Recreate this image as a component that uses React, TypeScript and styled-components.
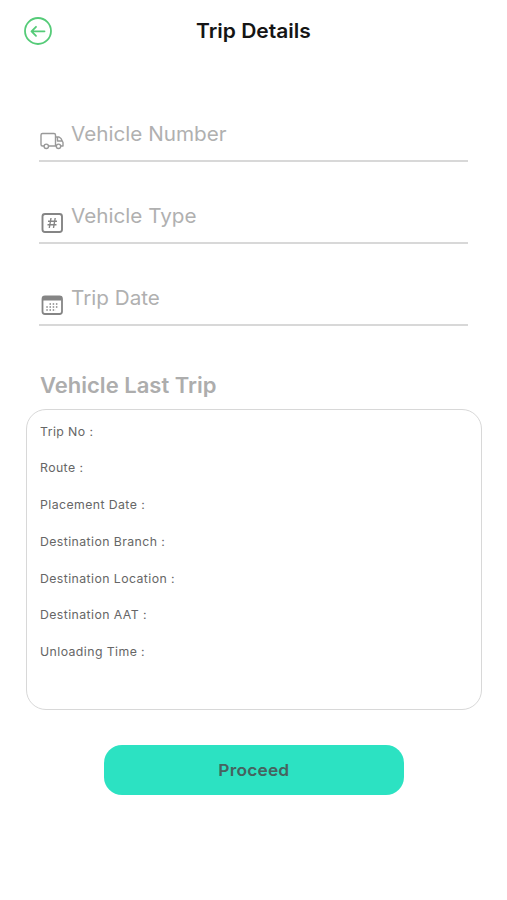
import React from "react";
import styled, { createGlobalStyle } from "styled-components";

const Global = createGlobalStyle`
  * { box-sizing: border-box; }
  body { margin: 0; background: #fff; font-family: Inter, "Liberation Sans", sans-serif; }
`;
const Screen = styled.main`
  width: 507px; height: 900px; background: #fff; overflow: hidden;
  display: flex; flex-direction: column;
`;
const Header = styled.header`
  height: 62px; display: grid; grid-template-columns: 76px 1fr 76px; align-items: center;
`;
const BackButton = styled.button`
  width: 30px; height: 30px; margin-left: 23px; padding: 0; border: 0; background: none; display: flex;
`;
const Title = styled.h1`
  margin: 0; text-align: center; font-size: 20px; font-weight: 600; line-height: 26px;
  transform: scaleX(1.05); color: #151515;
`;
const Form = styled.form`
  padding: 38px 39px 0; display: flex; flex-direction: column; gap: 20px;
`;
const Field = styled.label`
  height: 62px; border-bottom: 2px solid #d8d8d8; display: flex; gap: 7px; padding-top: 20.5px;
`;
const FieldIcon = styled.span`
  width: 25px; height: 26px; margin-top: 7.5px; display: flex;
`;
const FieldText = styled.span`
  font-size: 20px; line-height: 26px; color: #b0b0b0;
  transform: scaleX(1.033); transform-origin: left;
`;
const SectionTitle = styled.h2`
  margin: 45.5px 0 0 40px; font-size: 21px; line-height: 28px; font-weight: 600;
  transform: scaleX(1.049); transform-origin: left; align-self: flex-start; color: #adadad;
`;
const Card = styled.section`
  width: 456px; height: 301px; margin: 9.5px 0 0 26px; padding: 2.5px 12.500px;
  border: 1.5px solid #d8d8d8; border-radius: 20px;
`;
const Detail = styled.p`
  margin: 0; height: 36.75px; line-height: 38px; font-size: 11.8px; letter-spacing: 0.4px; color: #666;
  transform: scaleX(1.042); transform-origin: left;
`;
const Proceed = styled.button`
  width: 300px; height: 50px; margin: 34.5px 0 0 104px; padding: 0; border: 0; border-radius: 18px;
  background: #2ce2c2; font: 600 16.5px Inter, sans-serif; color: #46635f;
`;
const ProceedText = styled.span`
  display: inline-block; letter-spacing: 0.2px; transform: scaleX(1.05);
`;

const Arrow = () => (
  <svg width="30" height="30" viewBox="0 0 30 30" fill="none" stroke="#55cb78" strokeWidth="1.8" strokeLinecap="round" strokeLinejoin="round">
    <circle cx="15" cy="15" r="13" />
    <path d="M21.500 15.300H8.800M13 10.800l-4.500 4.500 4.500 4.500" />
  </svg>
);
const Truck = () => (
  <svg width="25" height="26" viewBox="0 0 25 26" fill="none" stroke="#999" strokeWidth="1.4" strokeLinejoin="round">
    <path d="M5 18H3.5Q2 18 2 16.500V7Q2 5.500 3.500 5.500H15Q16.500 5.500 16.500 7V18H9.500M16.500 9H20L22 10.500L24 14.500V18H22M18 18H16M18.500 9.500V13H23.500" />
    <circle cx="7.300" cy="18.300" r="2.200" /><circle cx="19.500" cy="18.300" r="2.200" />
  </svg>
);
const Hash = () => (
  <svg width="25" height="26" viewBox="0 0 25 26" fill="none" stroke="#858585" strokeWidth="1.9">
    <rect x="3.500" y="4" width="19.500" height="18" rx="2.500" />
    <path d="M12 8l-1.700 10M16.200 8l-1.700 10M9 11.300h9M8.500 14.700h9" strokeWidth="1.400" />
  </svg>
);
const Calendar = () => (
  <svg width="25" height="26" viewBox="0 0 25 26" fill="none" stroke="#858585" strokeWidth="1.8">
    <rect x="3.500" y="4.500" width="19.500" height="17.500" rx="2.500" />
    <path d="M4 6.500H22.500" strokeWidth="4" />
    <path d="M10.500 12H20M7.300 15H20M7.300 18H17" strokeDasharray="1.500 1.700" strokeWidth="1.300" />
  </svg>
);

const fields = [
  { text: "Vehicle Number", icon: <Truck /> },
  { text: "Vehicle Type", icon: <Hash /> },
  { text: "Trip Date", icon: <Calendar /> },
];
const details = ["Trip No :", "Route :", "Placement Date :", "Destination Branch :", "Destination Location :", "Destination AAT :", "Unloading Time :"];

export default function App() {
  return (
    <Screen>
      <Global />
      <Header><BackButton aria-label="Back"><Arrow /></BackButton><Title>Trip Details</Title></Header>
      <Form>{fields.map((f) => <Field key={f.text}><FieldIcon>{f.icon}</FieldIcon><FieldText>{f.text}</FieldText></Field>)}</Form>
      <SectionTitle>Vehicle Last Trip</SectionTitle>
      <Card>{details.map((d) => <Detail key={d}>{d}</Detail>)}</Card>
      <Proceed><ProceedText>Proceed</ProceedText></Proceed>
    </Screen>
  );
}
